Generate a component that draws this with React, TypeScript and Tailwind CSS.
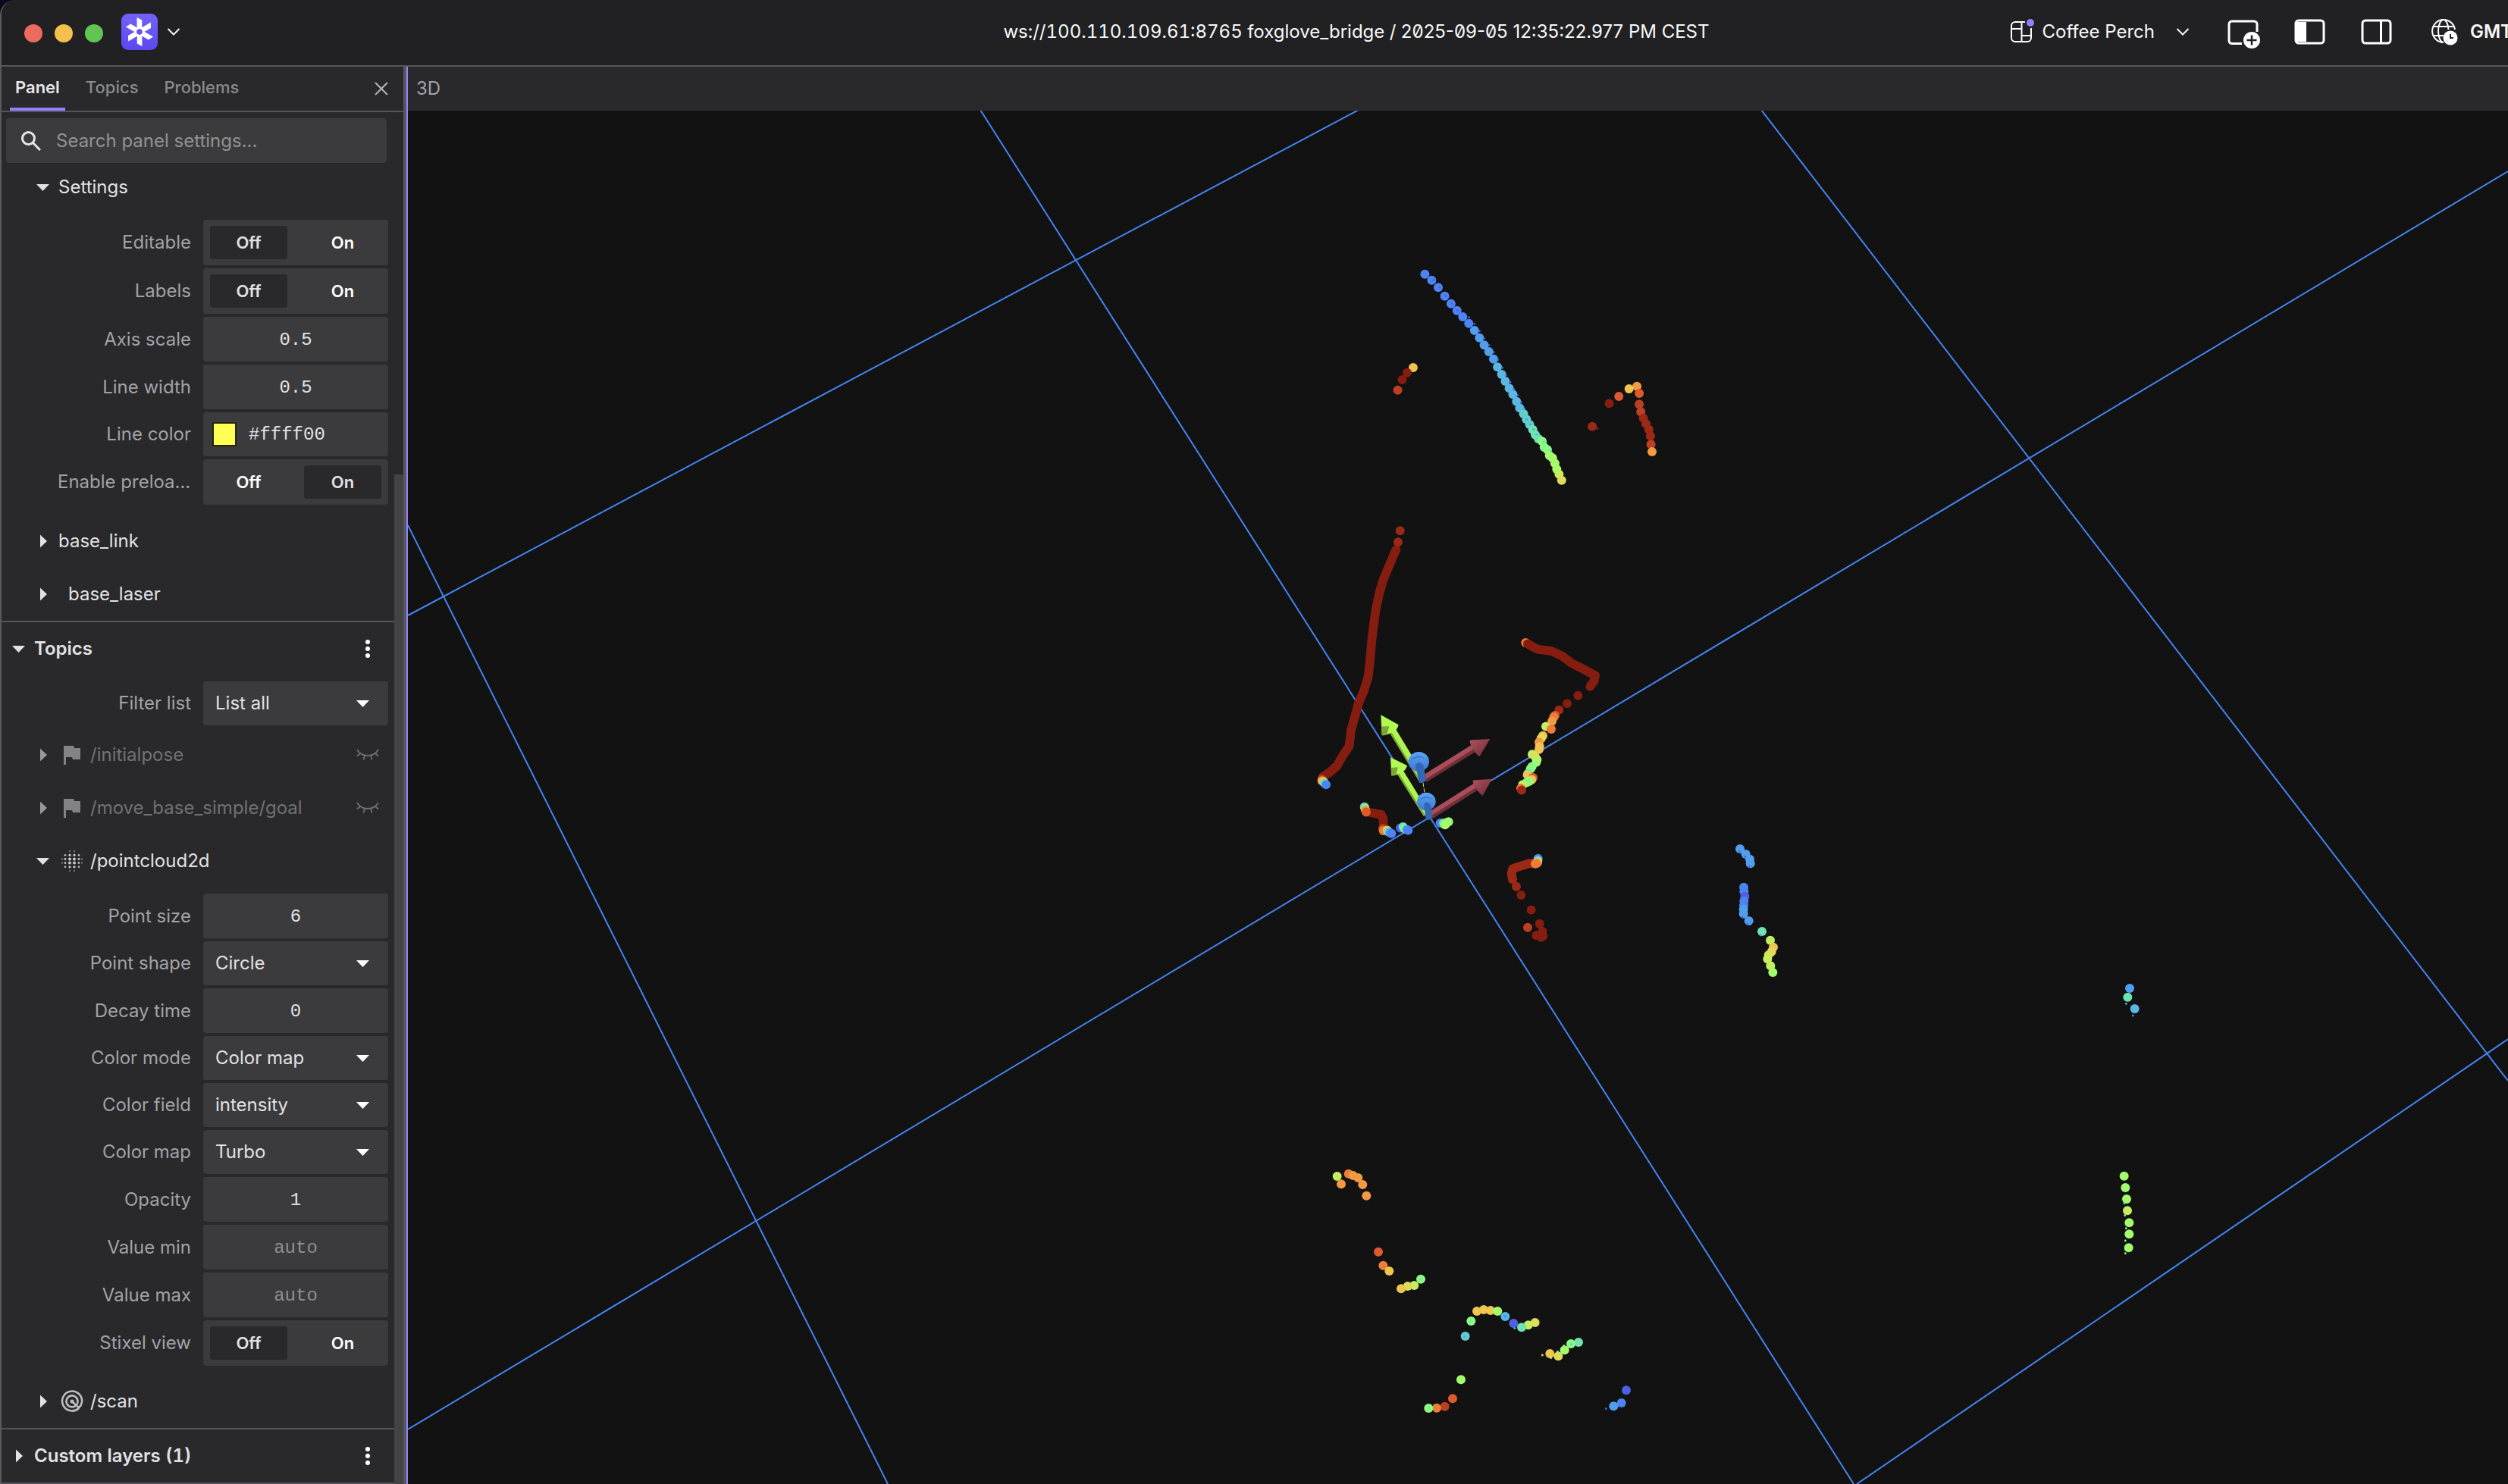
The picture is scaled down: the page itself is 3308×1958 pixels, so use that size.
import { useState, type ReactNode } from "react";

/* ------------------------------------------------------------------ */
/* Point cloud data                                                    */
/* ------------------------------------------------------------------ */

const TURBO: Record<string, string> = {
  R: "#861d11",
  r: "#9c2917",
  b: "#bb3f24",
  n: "#dc5a2e",
  o: "#ef7d38",
  a: "#f29a42",
  y: "#efc550",
  Y: "#dedc58",
  l: "#c4ee60",
  g: "#a4fb6c",
  G: "#8cfb84",
  t: "#70e3b2",
  C: "#62cccf",
  c: "#59b7e1",
  s: "#519eef",
  B: "#4c84f3",
  v: "#4d60e3",
};

type Dot = [number, number, string];
type Tile = { x: number; y: number; sx: number; sy: number; dots: Dot[]; trails?: Dot[][]; specks?: Dot[] };

// Every scan tile has its own origin and its own scale to view units.
const TILES: Tile[] = [
  {
    x: 1700,
    y: 320,
    sx: 2.904,
    sy: 3,
    dots: [
      [521, 125, "B"], [547, 149, "B"], [572, 178, "B"], [597, 212, "B"], [621, 242, "B"], [644, 269, "B"],
      [666, 294, "B"], [689, 320, "B"], [711, 348, "s"], [730, 377, "s"], [748, 406, "s"], [766, 432, "s"],
      [784, 461, "s"], [799, 493, "c"], [815, 522, "c"], [829, 549, "c"], [844, 577, "c"], [858, 601, "c"],
      [872, 629, "c"], [884, 655, "c"], [899, 678, "C"], [910, 700, "C"], [922, 720, "C"], [934, 740, "t"],
      [944, 761, "t"], [956, 777, "t"], [970, 787, "G"], [978, 810, "G"], [990, 820, "G"], [998, 843, "g"],
      [1010, 853, "g"], [1019, 874, "g"], [1026, 897, "g"], [1035, 917, "l"], [1045, 941, "Y"],
      [417, 584, "b"], [434, 543, "R"], [476, 495, "y"], [453, 515, "R"],
      [1162, 728, "r"], [1227, 637, "R"], [1264, 609, "n"], [1333, 569, "a"], [1303, 579, "y"],
      [1342, 597, "n"], [1342, 640, "b"], [1348, 670, "b"], [1358, 695, "r"], [1368, 718, "r"], [1379, 740, "r"],
      [1385, 766, "r"], [1387, 799, "b"], [1391, 828, "a"],
    ],
    specks: [
      [554, 149, "v"], [578, 178, "v"], [601, 212, "v"], [624, 242, "v"], [646, 269, "v"], [690, 296, "v"],
      [710, 322, "v"], [730, 350, "v"], [748, 379, "v"], [767, 407, "v"], [785, 434, "v"], [801, 464, "v"],
      [818, 496, "v"], [832, 525, "v"], [848, 553, "v"], [862, 580, "v"], [877, 605, "v"], [890, 633, "v"],
      [902, 657, "B"], [910, 700, "s"], [925, 720, "s"], [937, 740, "s"], [949, 760, "c"], [977, 789, "C"],
      [1002, 823, "t"], [1182, 736, "r"],
    ],
  },
  {
    x: 1700,
    y: 680,
    sx: 3,
    sy: 2.613,
    dots: [
      [440, 53, "r"], [432, 92, "r"],
      [131, 909, "b"], [131, 915, "a"], [137, 918, "y"], [141, 923, "t"], [147, 928, "B"],
      [1144, 621, "R"], [1101, 649, "R"], [1069, 671, "r"], [1053, 690, "n"], [1048, 696, "o"], [1041, 710, "a"],
      [1017, 728, "l"], [1038, 737, "o"], [1005, 760, "y"], [998, 769, "Y"], [990, 782, "a"], [992, 797, "y"],
      [990, 807, "y"], [963, 824, "l"], [975, 832, "Y"], [982, 842, "l"], [979, 851, "g"], [962, 866, "G"],
      [956, 874, "G"], [946, 890, "t"], [944, 895, "y"], [966, 904, "n"], [961, 911, "y"], [950, 917, "g"],
      [941, 921, "G"], [925, 928, "l"], [918, 941, "o"], [921, 947, "r"],
      [299, 1005, "c"], [301, 1009, "G"], [303, 1016, "a"], [306, 1023, "n"],
      [372, 1080, "b"], [374, 1087, "o"], [389, 1086, "y"], [393, 1090, "t"], [400, 1094, "s"], [406, 1097, "B"],
      [441, 1078, "v"], [452, 1074, "t"], [459, 1081, "G"], [466, 1083, "s"], [472, 1086, "B"],
      [599, 1061, "B"], [612, 1061, "t"], [632, 1056, "G"], [618, 1067, "g"], [627, 1058, "g"], [622, 1063, "g"],
      [986, 1183, "B"], [985, 1190, "t"], [984, 1196, "y"], [975, 1201, "o"], [980, 1200, "o"],
      [900, 1280, "r"], [919, 1309, "R"], [959, 1360, "R"], [945, 1421, "b"], [992, 1408, "R"], [1003, 1434, "R"],
      [979, 1448, "R"], [1006, 1450, "R"], [998, 1455, "R"],
    ],
    trails: [
      [[424, 118, "R"], [400, 167, "R"], [375, 218, "R"], [358, 268, "R"], [345, 320, "R"], [335, 380, "R"], [327, 440, "R"], [320, 510, "R"], [313, 560, "R"], [297, 604, "R"], [277, 644, "R"], [261, 694, "R"], [246, 740, "R"], [239, 795, "R"], [212, 830, "R"], [190, 864, "R"], [160, 887, "R"], [136, 900, "R"]],
      [[937, 439, "o"], [945, 443, "R"], [985, 462, "R"], [1037, 467, "R"], [1080, 484, "R"], [1120, 510, "R"], [1165, 530, "R"], [1212, 552, "R"], [1208, 570, "R"], [1192, 590, "R"]],
      [[325, 1025, "R"], [365, 1031, "R"], [373, 1045, "R"], [374, 1066, "R"]],
      [[965, 1200, "n"], [950, 1200, "r"], [915, 1210, "r"], [886, 1218, "r"], [881, 1235, "r"], [885, 1255, "r"]],
    ],
  },
  {
    x: 1740,
    y: 1520,
    sx: 3,
    sy: 3,
    dots: [
      [71, 96, "l"], [87, 127, "a"], [116, 86, "o"], [134, 93, "a"], [154, 102, "a"], [172, 129, "a"], [187, 173, "a"],
      [234, 395, "n"], [253, 449, "o"], [277, 471, "y"], [376, 528, "l"], [350, 531, "Y"], [324, 541, "y"], [402, 503, "G"],
      [578, 729, "C"], [601, 669, "G"], [624, 630, "y"], [678, 627, "y"], [651, 624, "y"], [706, 630, "g"], [736, 651, "c"],
      [769, 678, "v"], [854, 675, "Y"], [827, 685, "l"], [801, 694, "t"],
      [913, 798, "y"], [946, 808, "Y"], [971, 784, "g"], [1026, 753, "t"], [996, 759, "G"],
      [561, 901, "g"], [528, 976, "n"], [497, 1007, "b"], [465, 1013, "o"], [433, 1014, "G"],
      [1215, 943, "v"], [1196, 993, "B"], [1165, 1006, "s"],
    ],
    specks: [
      [402, 503, "t"], [574, 730, "s"], [598, 671, "t"], [622, 631, "Y"], [650, 625, "Y"], [677, 627, "Y"],
      [736, 651, "B"], [773, 698, "c"], [883, 804, "l"], [917, 815, "g"], [943, 790, "t"], [968, 766, "t"],
      [998, 761, "c"], [555, 901, "G"], [432, 1014, "t"], [1135, 1016, "v"],
    ],
  },
  {
    x: 2270,
    y: 1100,
    sx: 3,
    sy: 3,
    dots: [
      [75, 60, "s"], [98, 81, "s"], [114, 101, "s"], [116, 118, "s"], [90, 212, "B"], [91, 229, "B"], [94, 248, "v"],
      [91, 266, "B"], [90, 283, "B"], [89, 299, "s"], [89, 317, "s"], [110, 345, "s"], [162, 387, "t"], [195, 422, "l"],
      [207, 449, "y"], [200, 467, "Y"], [188, 480, "Y"], [184, 496, "l"], [196, 523, "l"], [205, 549, "g"],
    ],
    specks: [[73, 71, "v"], [95, 91, "v"], [113, 129, "v"], [84, 330, "v"], [104, 358, "v"], [157, 402, "s"], [204, 552, "G"]],
  },
  {
    x: 2780,
    y: 1290,
    sx: 3,
    sy: 3,
    dots: [
      [87, 42, "s"], [79, 77, "t"], [107, 123, "c"], [65, 785, "g"], [70, 831, "g"], [75, 876, "g"], [78, 922, "l"],
      [85, 970, "g"], [85, 1015, "g"], [83, 1069, "g"],
    ],
    specks: [[73, 103, "c"], [100, 150, "B"], [66, 893, "t"], [68, 941, "Y"], [73, 992, "G"], [70, 1041, "G"], [70, 1091, "G"]],
  },
];

const GRID = [
  [1293, 145, 2445, 1958],
  [538, 812, 1792, 145],
  [538, 693, 1171, 1958],
  [538, 1886, 3308, 226],
  [2323, 145, 3308, 1426],
  [2449, 1958, 3308, 1371],
];

function fillTrail(points: Dot[]): Dot[] {
  const out: Dot[] = [];
  points.forEach((p, i) => {
    out.push(p);
    const q = points[i + 1];
    if (!q) return;
    const steps = Math.max(1, Math.round(Math.hypot(q[0] - p[0], q[1] - p[1]) / 9));
    for (let k = 1; k < steps; k++) {
      const f = k / steps;
      out.push([p[0] + (q[0] - p[0]) * f, p[1] + (q[1] - p[1]) * f, q[2]]);
    }
  });
  return out;
}

function TileDots({ tile }: { tile: Tile }) {
  const dots = [...(tile.trails ?? []).flatMap(fillTrail), ...tile.dots];
  return (
    <g>
      {dots.map(([x, y, c], i) => (
        <circle key={i} cx={tile.x + x / tile.sx} cy={tile.y + y / tile.sy} r={6} fill={TURBO[c]} />
      ))}
      {tile.specks?.map(([x, y, c], i) => (
        <circle key={"s" + i} cx={tile.x + x / tile.sx} cy={tile.y + y / tile.sy} r={1.4} fill={TURBO[c]} />
      ))}
    </g>
  );
}

function Axes() {
  return (
    <g transform="translate(1700 680) scale(0.3333 0.3827)">
      <defs>
        <linearGradient id="coneRed" x1="0" y1="0" x2="1" y2="1">
          <stop offset="0" stopColor="#b1525f" />
          <stop offset="0.75" stopColor="#7a3440" />
        </linearGradient>
        <linearGradient id="headBlue" x1="0" y1="0" x2="0" y2="1">
          <stop offset="0" stopColor="#5ca4fa" />
          <stop offset="1" stopColor="#3c78cc" />
        </linearGradient>
      </defs>
      <path d="M516 917 L394 742 L420 732 L542 908Z" fill="#aef552" />
      <path d="M516 917 L394 742 L400 739 L522 916Z" fill="#7da838" />
      <path d="M533 1036 L422 882 L447 872 L556 1026Z" fill="#aef552" />
      <path d="M533 1036 L422 882 L428 879 L541 1036Z" fill="#7da838" />
      <path d="M364 688 L434 722 Q430 742 404 750 Q384 760 368 758Z" fill="#b0fa52" />
      <path d="M366 728 L397 727 L388 756 Q376 760 368 758Z" fill="#7ba535" />
      <path d="M402 834 L468 862 Q464 880 440 888 Q420 899 406 897Z" fill="#b0fa52" />
      <path d="M404 870 L432 868 L424 894 Q414 898 406 897Z" fill="#7ba535" />
      <path d="M534 894 L722 792 L737 815 L544 919Z" fill="#a84d5a" />
      <path d="M541 910 L733 805 L737 815 L544 919Z" fill="#6d2f38" />
      <path d="M560 1019 L734 923 L748 946 L568 1045Z" fill="#a84d5a" />
      <path d="M565 1035 L744 937 L748 946 L568 1045Z" fill="#6d2f38" />
      <path d="M796 771 L717 775 Q713 785 730 806 Q744 828 755 831Z" fill="url(#coneRed)" />
      <path d="M804 909 L729 913 Q725 920 742 942 Q756 962 767 966Z" fill="url(#coneRed)" />
      <path d="M531 922 L540 972" stroke="#e6e24a" strokeWidth="3" strokeDasharray="14 5" />
      <ellipse cx="514" cy="849" rx="41" ry="34" fill="url(#headBlue)" />
      <path d="M502 868 Q500 856 514 852 Q530 854 534 866 L543 912 Q536 924 516 922 Z" fill="#3267b6" />
      <path d="M480 846 Q494 830 514 828 Q536 832 549 848 Q540 836 514 834 Q492 838 480 846Z" fill="#3b79cf" />
      <ellipse cx="544" cy="987" rx="37" ry="31" fill="url(#headBlue)" />
      <path d="M536 1004 Q532 992 545 989 Q560 992 562 1004 L568 1042 Q560 1053 542 1049Z" fill="#3267b6" />
      <path d="M513 984 Q526 971 544 969 Q564 972 576 986 Q566 976 544 974 Q524 977 513 984Z" fill="#3b79cf" />
    </g>
  );
}

function Scene() {
  return (
    <svg viewBox="538 146 2770 1812" preserveAspectRatio="xMinYMin slice" className="block h-full w-full" role="img" aria-label="3D scene">
      {GRID.map(([x1, y1, x2, y2], i) => (
        <line key={i} x1={x1} y1={y1} x2={x2} y2={y2} stroke="#4384f0" strokeWidth={2} />
      ))}
      {TILES.map((t, i) => (
        <TileDots key={i} tile={t} />
      ))}
      <Axes />
    </svg>
  );
}

/* ------------------------------------------------------------------ */
/* Icons                                                               */
/* ------------------------------------------------------------------ */

function Triangle({ dir, className }: { dir: "down" | "right"; className?: string }) {
  return (
    <svg viewBox="0 0 18 18" className={`h-[18px] w-[18px] shrink-0 ${className ?? ""}`} fill="currentColor" aria-hidden="true">
      <path d={dir === "down" ? "M1 5h17l-8.500 9z" : "M6 0.500v17l9-8.500z"} />
    </svg>
  );
}

function Logo() {
  return (
    <svg viewBox="0 0 48 48" className="h-12 w-12" aria-hidden="true">
      <defs>
        <linearGradient id="logoBg" x1="0" y1="0" x2="0" y2="1">
          <stop offset="0" stopColor="#7362f8" />
          <stop offset="1" stopColor="#5b48f0" />
        </linearGradient>
      </defs>
      <rect width="48" height="48" rx="9" fill="url(#logoBg)" />
      {[0, 60, 120, 180, 240, 300].map((a) => (
        <path key={a} transform={`rotate(${a} 24 24)`} d="M20.6 5 L27.2 8.4 L27.2 20.5 L24 19.4 L20.6 20.8Z" fill="#fff" />
      ))}
      <path d="M24 16.8 L30.2 20.4 V27.6 L24 31.2 L17.8 27.6 V20.4Z" fill="#fff" />
      <path d="M24 19.8 L27.7 21.9 V26.1 L24 28.2 L20.3 26.1 V21.9Z" fill="#6553f5" />
    </svg>
  );
}

function Chevron({ className }: { className: string }) {
  return (
    <svg viewBox="0 0 18 12" className={className} fill="none" stroke="#f4f4f5" strokeWidth="2" aria-hidden="true">
      <path d="M1.5 2 9 9.5 16.5 2" />
    </svg>
  );
}

function LayoutIcon() {
  return (
    <svg viewBox="0 0 34 36" className="h-9 w-[34px]" fill="none" stroke="#fff" strokeWidth="2" aria-hidden="true">
      <path d="M20 5H7a5 5 0 0 0-5 5v16a5 5 0 0 0 5 5h16a5 5 0 0 0 5-5V13" />
      <path d="M15.500 5v26M2 14h13.500M15.500 23H28" />
      <circle cx="27" cy="6" r="5" fill="#9181fb" stroke="none" />
    </svg>
  );
}

function AddPanelIcon() {
  return (
    <svg viewBox="0 0 44 40" className="h-10 w-11" fill="none" stroke="#fff" strokeWidth="3" aria-hidden="true">
      <path d="M19 31.500H6a4 4 0 0 1-4-4V6a4 4 0 0 1 4-4h29a4 4 0 0 1 4 4v10" />
      <circle cx="32" cy="27" r="11" fill="#fff" stroke="none" />
      <path d="M32 20.500v13M25.500 27h13" stroke="#212123" strokeWidth="2.500" />
    </svg>
  );
}

function SidebarIcon({ side }: { side: "left" | "right" }) {
  return (
    <svg viewBox="0 0 42 34" className="h-[34px] w-[42px]" fill="none" stroke="#fff" strokeWidth="3" aria-hidden="true">
      <rect x="2" y="2" width="37" height="30" rx="4" />
      {side === "left" ? <path d="M2 4h14v26H2z" fill="#fff" stroke="none" /> : <path d="M26.500 2v30" />}
    </svg>
  );
}

function GlobeIcon() {
  return (
    <svg viewBox="0 0 36 36" className="h-9 w-9" fill="none" stroke="#fff" strokeWidth="2" aria-hidden="true">
      <path d="M32 15A15 15 0 1 0 17 32" />
      <path d="M23.500 15C23 7 20 2 17 2c-4 0-7 7-7 15s3 15 7 15" />
      <path d="M3.500 11h27M3.500 23H17" />
      <circle cx="26" cy="26" r="9.500" fill="#fff" stroke="none" />
      <path d="M26 21v5h4" stroke="#212123" />
    </svg>
  );
}

function FlagIcon() {
  return (
    <svg viewBox="0 0 24 26" className="h-[26px] w-6" fill="#838386" aria-hidden="true">
      <path d="M1 1h13l1 3h8v15H13l-1-3H4v10H1z" />
    </svg>
  );
}

function PointsIcon() {
  const rows = [
    [0, 1, 1, 0],
    [1.5, 2, 2, 1.5],
    [1.8, 2.5, 2.5, 1.8],
    [1.8, 2.5, 2.5, 1.8],
    [1.5, 2, 2, 1.5],
    [0, 1, 1, 0],
  ];
  return (
    <svg viewBox="0 0 28 28" className="h-7 w-7" fill="#c9c9cb" aria-hidden="true">
      {rows.map((r, j) => r.map((s, i) => <circle key={`${i}-${j}`} cx={5 + i * 6} cy={1 + j * 5.2} r={s * 0.8} />))}
      <circle cx="1" cy="11.400" r="0.800" />
      <circle cx="1" cy="16.600" r="0.800" />
      <circle cx="27" cy="11.400" r="0.800" />
      <circle cx="27" cy="16.600" r="0.800" />
    </svg>
  );
}

function RadarIcon() {
  return (
    <svg viewBox="0 0 30 30" className="-mx-px h-[30px] w-[30px]" fill="none" stroke="#bdbdbf" strokeWidth="2.600" aria-hidden="true">
      <path d="M24 24A13 13 0 1 1 28 16a13 13 0 0 1-4 7.500L15 15" />
      <path d="M20 20.500A7.500 7.500 0 1 1 22.500 15a7 7 0 0 1-1 4" />
      <circle cx="15" cy="15" r="2.600" fill="#bdbdbf" stroke="none" />
    </svg>
  );
}

function HiddenEye() {
  return (
    <svg viewBox="0 0 30 16" className="h-4 w-[30px]" fill="none" stroke="#6f6f72" strokeWidth="1.800" aria-hidden="true">
      <path d="M1 1C4 6 9 9 15 9s11-3 14-8" />
      <path d="M5 6 1 9.500M25 6l4 3.500M11 8.500 9.500 14.500M19 8.500l1.500 6" />
    </svg>
  );
}

function MoreIcon() {
  return (
    <svg viewBox="0 0 6 24" className="h-6 w-[6px]" fill="#fff" aria-hidden="true">
      <circle cx="3" cy="3" r="3" />
      <circle cx="3" cy="12" r="3" />
      <circle cx="3" cy="21" r="3" />
    </svg>
  );
}

/* ------------------------------------------------------------------ */
/* Settings fields                                                     */
/* ------------------------------------------------------------------ */

const MONO = "pt-[2px] font-['Liberation_Mono',monospace]";

function Field({ label, htmlFor, children }: { label: string; htmlFor?: string; children: ReactNode }) {
  return (
    <div className="grid grid-cols-[1fr_244px] items-center gap-4 pr-2">
      <label htmlFor={htmlFor} className="truncate pl-[74px] text-right leading-8 text-[#a3a1aa]">
        {label}
      </label>
      {children}
    </div>
  );
}

function Toggle({ label, initial = "Off" }: { label: string; initial?: string }) {
  const [value, setValue] = useState(initial);
  return (
    <Field label={label}>
      <div role="group" aria-label={label} className="grid h-[60px] grid-cols-2 gap-[22px] rounded-[4px] bg-[#3b3b3d] px-[9px] py-2">
        {["Off", "On"].map((o) => (
          <button
            key={o}
            type="button"
            aria-pressed={value === o}
            onClick={() => setValue(o)}
            className={`rounded-[4px] text-[22px] leading-8 font-semibold ${value === o ? "bg-[#29292b] text-[#e1e1e4]" : "text-white"}`}
          >
            {o}
          </button>
        ))}
      </div>
    </Field>
  );
}

function NumberField({ label, value = "", placeholder }: { label: string; value?: string; placeholder?: string }) {
  const id = label.toLowerCase().replace(" ", "-");
  return (
    <Field label={label} htmlFor={id}>
      <input
        id={id}
        type="text"
        defaultValue={value}
        placeholder={placeholder}
        className={`h-[59px] w-full min-w-0 rounded-[4px] bg-[#3b3b3d] text-center text-[#e1e1e4] placeholder:text-[#8f8f92] ${MONO}`}
      />
    </Field>
  );
}

function SelectField({ label, value }: { label: string; value: string }) {
  const id = label.toLowerCase().replace(" ", "-");
  return (
    <Field label={label} htmlFor={id}>
      <div className="relative h-[58px]">
        <select id={id} defaultValue={value} className="h-full w-full appearance-none rounded-[4px] bg-[#3b3b3d] pl-4 text-[#e1e1e4]">
          <option>{value}</option>
        </select>
        <Triangle dir="down" className="pointer-events-none absolute top-5 right-[25px] text-white" />
      </div>
    </Field>
  );
}

function Node({ open, icon, label, indent, hidden }: { open?: boolean; icon?: ReactNode; label: string; indent?: boolean; hidden?: boolean }) {
  return (
    <div className="flex h-[70px] items-center pr-5 pl-[45px]">
      <button
        type="button"
        aria-expanded={!!open}
        className={`flex flex-1 items-center text-left ${hidden ? "text-[#717174]" : "text-[#e1e1e4]"}`}
      >
        <Triangle dir={open ? "down" : "right"} className={hidden ? "text-[#98989b]" : ""} />
        {icon ? <span className="mr-[10px] ml-4 flex w-7 justify-center">{icon}</span> : <span className={indent ? "w-[25px]" : "w-3"} />}
        <span>{label}</span>
      </button>
      {hidden && (
        <button type="button" aria-label={`Show ${label}`}>
          <HiddenEye />
        </button>
      )}
    </div>
  );
}

function Section({ open, label }: { open?: boolean; label: string }) {
  return (
    <div className="flex h-[70px] items-center justify-between pr-8 pl-[13px]">
      <button type="button" aria-expanded={!!open} className="flex items-center gap-3 font-semibold text-[#e1e1e4] tabular-nums">
        <Triangle dir={open ? "down" : "right"} />
        {label}
      </button>
      <button type="button" aria-label={`${label} menu`}>
        <MoreIcon />
      </button>
    </div>
  );
}

function Sidebar() {
  return (
    <aside className="flex w-[534px] shrink-0 flex-col border-r-4 border-[#57565f] bg-[#29292b]">
      <div className="flex h-[60px] shrink-0 items-stretch border-b-2 border-[#55545c] pr-5 pl-[11px] text-[22px] font-medium text-[#8b8b8f]">
        <div role="tablist" className="flex flex-1 gap-5">
          <button role="tab" aria-selected="true" className="border-b-4 border-[#9181fb] px-[7px] pt-[2px] font-semibold text-[#e6e6e9]">
            Panel
          </button>
          <button role="tab" aria-selected="false" className="border-b-4 border-transparent px-[7px] pt-[2px]">
            Topics
          </button>
          <button role="tab" aria-selected="false" className="border-b-4 border-transparent px-[7px] pt-[2px]">
            Problems
          </button>
        </div>
        <button type="button" aria-label="Close sidebar" className="flex items-center">
          <svg viewBox="0 0 18 18" className="h-[18px] w-[18px]" stroke="#b4b3ba" strokeWidth="2" aria-hidden="true">
            <path d="M1 1l16 16M17 1L1 17" />
          </svg>
        </button>
      </div>
      <label className="mt-2 mr-[22px] ml-[6px] flex h-[59px] shrink-0 items-center gap-5 rounded-[4px] bg-[#3b3b3d] pl-5">
        <svg viewBox="0 0 26 26" className="h-[26px] w-[26px]" fill="none" stroke="#e6e6e9" strokeWidth="3" aria-hidden="true">
          <circle cx="9.500" cy="9.500" r="8" />
          <path d="M15.500 15.500 25 25" />
        </svg>
        <input type="text" aria-label="Search" placeholder="Search panel settings..." className="min-w-0 flex-1 bg-transparent placeholder:text-[#929294]" />
      </label>
      <div className="flex min-h-0 flex-1">
        <div className="-mt-[3px] min-w-0 flex-1">
          <Node open label="Settings" />
          <div className="flex flex-col gap-1 pt-2 pb-[13px]">
            <Toggle label="Editable" />
            <Toggle label="Labels" />
            <NumberField label="Axis scale" value="0.5" />
            <NumberField label="Line width" value="0.5" />
            <Field label="Line color" htmlFor="line-color">
              <div className="flex h-[58px] items-center gap-4 rounded-[4px] bg-[#3b3b3d] pl-3">
                <button type="button" aria-label="Pick line color" className="h-8 w-8 border-2 border-[#25240f] bg-[#ffff54]" />
                <input id="line-color" type="text" defaultValue="#ffff00" className={`min-w-0 flex-1 bg-transparent text-[#e1e1e4] ${MONO}`} />
              </div>
            </Field>
            <Toggle label="Enable preloading" initial="On" />
          </div>
          <Node label="base_link" />
          <Node label="base_laser" indent />
          <div className="border-t-2 border-[#55545c]">
            <Section open label="Topics" />
            <div className="pt-2 pb-1">
              <SelectField label="Filter list" value="List all" />
            </div>
            <Node label="/initialpose" icon={<FlagIcon />} hidden />
            <Node label="/move_base_simple/goal" icon={<FlagIcon />} hidden />
            <Node open label="/pointcloud2d" icon={<PointsIcon />} />
            <div className="flex flex-col gap-1 pt-2 pb-3">
              <NumberField label="Point size" value="6" />
              <SelectField label="Point shape" value="Circle" />
              <NumberField label="Decay time" value="0" />
              <SelectField label="Color mode" value="Color map" />
              <SelectField label="Color field" value="intensity" />
              <SelectField label="Color map" value="Turbo" />
              <NumberField label="Opacity" value="1" />
              <NumberField label="Value min" placeholder="auto" />
              <NumberField label="Value max" placeholder="auto" />
              <Toggle label="Stixel view" />
            </div>
            <Node label="/scan" icon={<RadarIcon />} />
          </div>
          <div className="border-y-2 border-[#55545c]">
            <Section label="Custom layers (1)" />
          </div>
        </div>
        <div className="flex w-3 shrink-0 items-end">
          <div className="h-[76.400%] w-full bg-[#434345]" />
        </div>
      </div>
    </aside>
  );
}

/* ------------------------------------------------------------------ */
/* Page                                                                */
/* ------------------------------------------------------------------ */

function TopBar() {
  return (
    <header className="grid h-[88px] shrink-0 grid-cols-[1fr_auto_1fr] items-center border-b-2 border-[#55545c] bg-[#212123] pb-[2px] text-[#f8f8f9]">
      <div className="flex items-center pl-[30px]">
        <div className="flex gap-4 pt-1">
          <span className="h-6 w-6 rounded-full bg-[#ed6a5e]" />
          <span className="h-6 w-6 rounded-full bg-[#f4bf4f]" />
          <span className="h-6 w-6 rounded-full bg-[#61c554]" />
        </div>
        <button type="button" aria-label="App menu" className="ml-6 flex items-center gap-3">
          <Logo />
          <Chevron className="h-3 w-[18px]" />
        </button>
      </div>
      <h1 className="pl-[268px] whitespace-nowrap tabular-nums">
        ws://100.110.109.61:8765 foxglove_bridge / <time className="slashed-zero">2025-09-05 12:35:22.977 PM CEST</time>
      </h1>
      <div className="flex items-center justify-end overflow-hidden">
        <button type="button" className="flex shrink-0 items-center gap-2 whitespace-nowrap">
          <LayoutIcon />
          <span>Coffee Perch</span>
          <Chevron className="ml-5 h-3 w-[18px]" />
        </button>
        <button type="button" aria-label="Add panel" className="mt-2 ml-[50px] shrink-0">
          <AddPanelIcon />
        </button>
        <button type="button" aria-label="Left sidebar" className="ml-11 shrink-0">
          <SidebarIcon side="left" />
        </button>
        <button type="button" aria-label="Right sidebar" className="ml-[46px] shrink-0">
          <SidebarIcon side="right" />
        </button>
        <button type="button" className="ml-[50px] flex w-[102px] shrink-0 items-center gap-4 font-semibold whitespace-nowrap">
          <span className="shrink-0">
            <GlobeIcon />
          </span>
          GMT
        </button>
      </div>
    </header>
  );
}

export default function App() {
  return (
    <div className="h-screen bg-[#0c0720]">
      <div className="flex h-full flex-col overflow-hidden rounded-tl-[20px] border-l-2 border-[#5a5a5c] bg-[#212123] font-['Inter',sans-serif] text-2xl">
        <TopBar />
        <div className="flex min-h-0 flex-1">
          <Sidebar />
          <main className="flex min-w-0 flex-1 flex-col border-l-2 border-[#9181fb] bg-[#121212]">
            <div className="flex h-[58px] shrink-0 items-center bg-[#29292b] pl-[11px] text-[#a3a1aa]">3D</div>
            <div className="min-h-0 flex-1">
              <Scene />
            </div>
          </main>
        </div>
      </div>
    </div>
  );
}
